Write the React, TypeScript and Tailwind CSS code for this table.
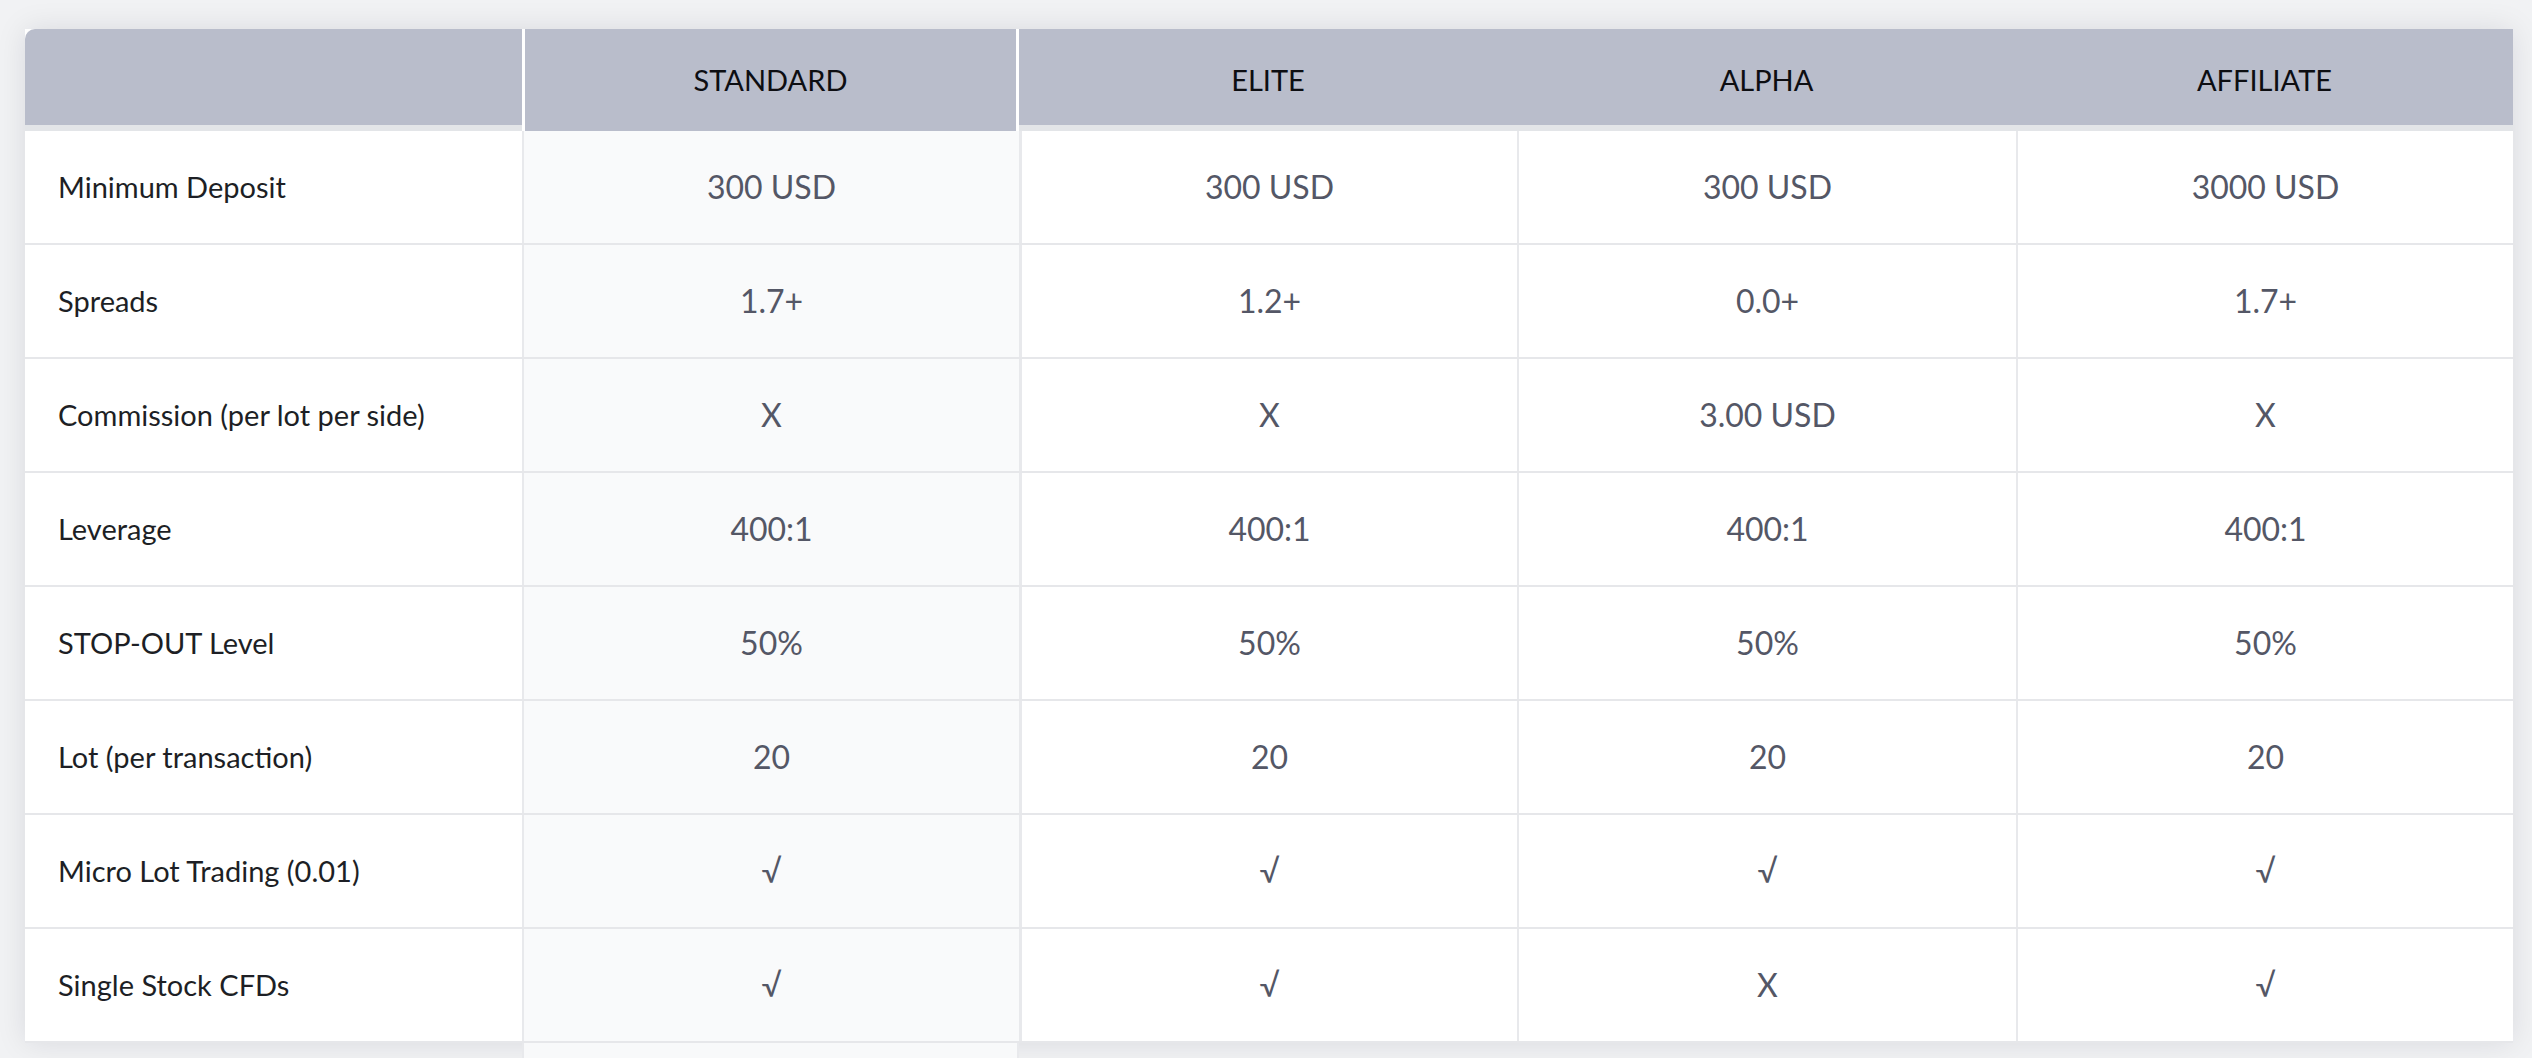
import React from 'react';

const plans = ['STANDARD', 'ELITE', 'ALPHA', 'AFFILIATE'];

const rows: { label: string; values: string[] }[] = [
  { label: 'Minimum Deposit', values: ['300 USD', '300 USD', '300 USD', '3000 USD'] },
  { label: 'Spreads', values: ['1.7+', '1.2+', '0.0+', '1.7+'] },
  { label: 'Commission (per lot per side)', values: ['X', 'X', '3.00 USD', 'X'] },
  { label: 'Leverage', values: ['400:1', '400:1', '400:1', '400:1'] },
  { label: 'STOP-OUT Level', values: ['50%', '50%', '50%', '50%'] },
  { label: 'Lot (per transaction)', values: ['20', '20', '20', '20'] },
  { label: 'Micro Lot Trading (0.01)', values: ['√', '√', '√', '√'] },
  { label: 'Single Stock CFDs', values: ['√', '√', 'X', '√'] },
];

export default function App() {
  return (
    <div className="min-h-screen bg-[#f1f2f4] pl-[25px] pt-[29px] font-['Lato','Liberation_Sans',sans-serif]">
      <div className="w-[2488px] bg-white shadow-[0_0_28px_rgba(20,24,40,0.10)]">
        {/* header */}
        <div className="grid grid-cols-[497px_497px_498px_499px_497px] h-[102px]">
          <div className="bg-[#b9bdcb] border-b-[6px] border-[#e3e5e8] rounded-tl-[10px]" />
          <div className="bg-[#b9bdcb] border-x-[3px] border-white flex items-center justify-center text-[29px] text-[#0d0e12]">
            STANDARD
          </div>
          {plans.slice(1).map((p) => (
            <div
              key={p}
              className="bg-[#b9bdcb] border-b-[6px] border-[#e3e5e8] flex items-center justify-center pt-[6px] text-[29px] text-[#0d0e12]"
            >
              {p}
            </div>
          ))}
        </div>

        {/* body */}
        {rows.map((r) => (
          <div
            key={r.label}
            className="grid grid-cols-[497px_497px_498px_499px_497px] h-[114px] border-b-2 border-[#e6e7ea]"
          >
            <div className="flex items-center pl-[33px] text-[29px] text-[#1d1f25]">{r.label}</div>
            {r.values.map((v, i) => (
              <div
                key={i}
                className={`flex items-center justify-center text-[32px] text-[#545766] border-l-2 border-[#e8e9ec] ${
                  i === 0 ? 'bg-[#f9fafb]' : ''
                } ${i === 1 ? 'border-l-[3px]' : ''}`}
              >
                {v}
              </div>
            ))}
          </div>
        ))}
      </div>
      {/* standard column runs on below the table */}
      <div className="ml-[497px] w-[497px] h-[40px] bg-[#f8f9fa] border-x-2 border-[#e8e9ec]" />
    </div>
  );
}
